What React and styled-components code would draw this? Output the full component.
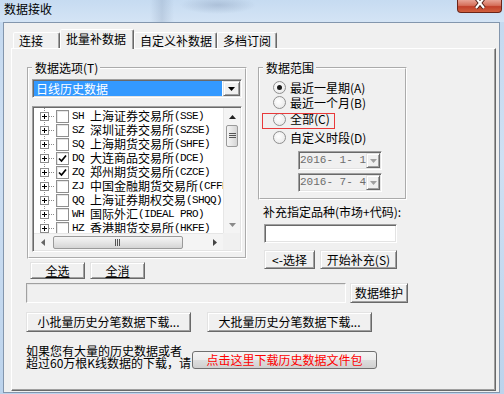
import React from 'react'
import styled, { createGlobalStyle, css } from 'styled-components'

const GlobalStyle = createGlobalStyle`
  html, body { margin: 0; padding: 0; }
  body {
    font-family: "Noto Sans CJK SC", "Noto Sans", sans-serif;
    font-size: 12px;
    color: #000;
  }
`

// classic 3D edges
const raised = css`
  border: 1px solid;
  border-color: #e3e3e3 #696969 #696969 #e3e3e3;
  box-shadow: inset 1px 1px #fff, inset -1px -1px #a0a0a0;
  background: #f0f0f0;
`
const sunken = css`
  border: 1px solid;
  border-color: #a0a0a0 #fff #fff #a0a0a0;
  box-shadow: inset 1px 1px #696969, inset -1px -1px #e3e3e3;
`

const markets = [
  { code: 'SH', name: '上海证券交易所', abbr: 'SSE' },
  { code: 'SZ', name: '深圳证券交易所', abbr: 'SZSE' },
  { code: 'SQ', name: '上海期货交易所', abbr: 'SHFE' },
  { code: 'DQ', name: '大连商品交易所', abbr: 'DCE', checked: true },
  { code: 'ZQ', name: '郑州期货交易所', abbr: 'CZCE', checked: true },
  { code: 'ZJ', name: '中国金融期货交易所', abbr: 'CFFEX' },
  { code: 'QQ', name: '上海证券期权交易', abbr: 'SHQQ' },
  { code: 'WH', name: '国际外汇', abbr: 'IDEAL PRO' },
  { code: 'HZ', name: '香港期货交易所', abbr: 'HKFE' },
  { code: 'HG', name: '香港联合交易所', abbr: 'HKEX' },
]

const ranges = [
  { label: '最近一星期(A)', h: 15, checked: true },
  { label: '最近一个月(B)', h: 15 },
  { label: '全部(C)', h: 18, marked: true },
  { label: '自定义时段(D)', h: 19 },
]

const Window = styled.div`
  width: 504px;
  height: 394px;
  overflow: hidden;
  display: flex;
  flex-direction: column;
  background: linear-gradient(180deg, #c3d8ef 0%, #cfe0f3 40%, #bcd3ec 100%);
`

const TitleBar = styled.div`
  height: 22px;
  flex: none;
  display: flex;
  justify-content: space-between;
  align-items: flex-start;
  background:
    radial-gradient(ellipse 38px 9px at 218px 5px, rgba(120, 140, 170, 0.35), transparent),
    linear-gradient(90deg, transparent 150px, rgba(110, 130, 160, 0.22) 162px, transparent 174px),
    linear-gradient(180deg, #c6dbf1, #d4e4f5);
`

const Title = styled.div`
  padding: 3px 0 0 4px;
  font-size: 12px;
  line-height: 12px;
  color: #000;
`

const CloseButton = styled.div`
  width: 45px;
  height: 13px;
  margin-right: 2px;
  box-sizing: border-box;
  border: 1px solid #6b2418;
  border-top: none;
  border-radius: 0 0 4px 4px;
  background: linear-gradient(180deg, #e8a395 0%, #d6705b 45%, #c2402a 55%, #d0603f 100%);
  display: flex;
  justify-content: center;
  align-items: flex-start;
`

const Client = styled.div`
  flex: 1;
  margin: 0 4px 1px 3px;
  border: 1px solid #8396ad;
  background: #f0f0f0;
  display: flex;
  flex-direction: column;
`

const TabRow = styled.div`
  height: 25px;
  margin-left: 9px;
  display: flex;
  align-items: flex-end;
`

const Tab = styled.div`
  box-sizing: border-box;
  width: ${p => p.$w}px;
  height: ${p => (p.$active ? 20 : 16)}px;
  margin-bottom: ${p => (p.$active ? -1 : 0)}px;
  position: relative;
  z-index: ${p => (p.$active ? 2 : 0)};
  padding-left: 5px;
  border: 1px solid;
  border-bottom: none;
  border-color: #fff #696969 transparent #fff;
  border-radius: 2px 2px 0 0;
  box-shadow: inset -1px 0 #a0a0a0;
  background: #f0f0f0;
  font-size: 12px;
  line-height: ${p => (p.$active ? 18 : 15)}px;
  white-space: nowrap;
`

const TabPanel = styled.div`
  box-sizing: border-box;
  width: 485px;
  height: 343px;
  margin-left: 7px;
  padding: 12px 0 0 14px;
  border: 1px solid;
  border-color: #fff #696969 #696969 #fff;
  box-shadow: inset -1px -1px #a0a0a0;
`

const TopSection = styled.div`
  display: flex;
  gap: 11px;
  align-items: flex-start;
`

const Column = styled.div`
  width: ${p => p.$w}px;
  display: flex;
  flex-direction: column;
`

const GroupBox = styled.fieldset`
  box-sizing: border-box;
  min-width: 0;
  width: ${p => p.$w}px;
  margin: 0 0 0 ${p => p.$ml || 0}px;
  padding: ${p => p.$pad};
  border: 2px groove #fff;
`

const Legend = styled.legend`
  padding: 0 2px 0 3px;
  font-size: 12px;
  line-height: 14px;
`

const Combo = styled.div`
  box-sizing: border-box;
  width: 210px;
  height: 19px;
  padding: 1px;
  ${sunken};
  background: #fff;
  display: flex;
`

const ComboValue = styled.div`
  flex: 1;
  margin-right: 1px;
  padding-left: 2px;
  background: #3399ff;
  color: #fff;
  font-size: 12px;
  line-height: 15px;
`

const DropButton = styled.div`
  box-sizing: border-box;
  width: ${p => p.$w}px;
  ${raised};
  display: flex;
  align-items: center;
  justify-content: center;
`

const ListBox = styled.div`
  box-sizing: border-box;
  width: 210px;
  height: 146px;
  margin-top: 8px;
  padding: 1px;
  ${sunken};
  background: #fff;
  display: grid;
  grid-template-columns: 1fr 17px;
  grid-template-rows: 1fr 17px;
`

const ListBody = styled.div`
  overflow: hidden;
  padding-top: 1px;
  background:
    repeating-linear-gradient(180deg, #8a8a8a 0 1px, transparent 1px 2px) 10px 0 / 1px 100% no-repeat,
    #fff;
`

const Row = styled.div`
  height: 14px;
  padding-left: 6px;
  display: flex;
  align-items: center;
  white-space: nowrap;
`

const Connector = styled.span`
  width: 6px;
  height: 1px;
  flex: none;
  background: repeating-linear-gradient(90deg, #8a8a8a 0 1px, transparent 1px 2px);
`

const CheckBox = styled.span`
  box-sizing: border-box;
  width: 13px;
  height: 13px;
  flex: none;
  margin: 0 3px 0 1px;
  border: 1px solid #8f8f8f;
  background: #fff;
  box-shadow: inset 1px 1px #e6e6e6;
  display: flex;
  align-items: center;
  justify-content: center;
`

const Code = styled.span`
  font-family: "Liberation Mono", monospace;
  font-size: 11px;
  letter-spacing: -0.6px;
  line-height: 14px;
  margin-right: 6px;
`

const Name = styled.span`
  font-size: 12px;
  line-height: 14px;
`

const VScroll = styled.div`
  display: flex;
  flex-direction: column;
  background: #f4f4f4;
  border-left: 1px solid #e6e6e6;
`

const HScroll = styled.div`
  display: flex;
  align-items: center;
  background: #f4f4f4;
  border-top: 1px solid #e6e6e6;
`

const ScrollCorner = styled.div`
  background: #f0f0f0;
`

const ArrowBox = styled.div`
  width: 17px;
  height: 17px;
  flex: none;
  display: flex;
  align-items: center;
  justify-content: center;
`

const VThumb = styled.div`
  height: 22px;
  margin: 0 2px;
  box-sizing: border-box;
  border: 1px solid #9a9a9a;
  border-radius: 2px;
  background: linear-gradient(90deg, #f5f5f5, #e6e6e6 50%, #d5d5d5);
  display: flex;
  align-items: center;
  justify-content: center;
`

const HThumb = styled.div`
  width: 130px;
  height: 13px;
  margin-left: 2px;
  box-sizing: border-box;
  border: 1px solid #9a9a9a;
  border-radius: 2px;
  background: linear-gradient(180deg, #f5f5f5, #e6e6e6 50%, #d5d5d5);
  display: flex;
  align-items: center;
  justify-content: center;
`

const Spacer = styled.div`
  flex: 1;
`

const ButtonRow = styled.div`
  display: flex;
  gap: ${p => p.$gap}px;
  margin: ${p => p.$m};
`

const Button = styled.button`
  box-sizing: border-box;
  width: ${p => p.$w}px;
  height: ${p => p.$h}px;
  padding: 0;
  ${raised};
  font-family: inherit;
  font-size: 12px;
  line-height: 12px;
  color: #000;
  text-decoration: ${p => (p.$u ? 'underline' : 'none')};
  white-space: nowrap;
`

const RadioList = styled.div`
  margin-left: 10px;
  display: flex;
  flex-direction: column;
`

const RadioRow = styled.div`
  position: relative;
  height: ${p => p.$h}px;
  display: flex;
  align-items: center;
`

const RadioDot = styled.span`
  box-sizing: border-box;
  width: 13px;
  height: 13px;
  flex: none;
  border-radius: 50%;
  border: 1px solid #8f8f8f;
  background: radial-gradient(circle at 40% 40%, #fff, #e4e4e4);
  display: flex;
  align-items: center;
  justify-content: center;
  &::after {
    content: '';
    width: 5px;
    height: 5px;
    border-radius: 50%;
    background: ${p => (p.$on ? '#1a1a1a' : 'transparent')};
  }
`

const RadioLabel = styled.span`
  margin-left: 4px;
  font-size: 12px;
  line-height: 14px;
`

const Annotation = styled.div`
  position: absolute;
  left: -11px;
  top: 3px;
  width: 73px;
  height: 16px;
  box-sizing: border-box;
  border: 1px solid #e8393a;
  pointer-events: none;
`

const DatePicker = styled.div`
  box-sizing: border-box;
  width: 84px;
  height: 19px;
  margin: ${p => p.$mt}px 0 0 35px;
  padding: 1px;
  ${sunken};
  background: #f0f0f0;
  display: flex;
`

const DateText = styled.div`
  flex: 1;
  color: #6d6d6d;
  font-family: "Liberation Mono", monospace;
  font-size: 11px;
  line-height: 15px;
  white-space: pre;
`

const SideLabel = styled.div`
  margin: 6px 0 0 5px;
  font-size: 12px;
  line-height: 12px;
  white-space: nowrap;
`

const TextInput = styled.div`
  box-sizing: border-box;
  width: 133px;
  height: 19px;
  margin: 6px 0 0 6px;
  ${sunken};
  background: #fff;
`

const ProgressRow = styled.div`
  display: flex;
  gap: 4px;
  margin-top: 4px;
`

const ProgressBox = styled.div`
  box-sizing: border-box;
  width: 320px;
  height: 20px;
  border: 1px solid;
  border-color: #a0a0a0 #fff #fff #a0a0a0;
  box-shadow: inset 1px 1px #e3e3e3;
  background: #f0f0f0;
`

const Footer = styled.div`
  display: flex;
  align-items: flex-end;
  margin-top: 13px;
`

const Notice = styled.div`
  font-size: 12px;
  line-height: 12px;
  white-space: nowrap;
`

const LinkButton = styled.button`
  box-sizing: border-box;
  width: 185px;
  height: 18px;
  margin-left: 1px;
  padding: 0;
  border: 1px solid #707070;
  border-radius: 3px;
  background: linear-gradient(180deg, #f4f4f4 0%, #ececec 50%, #dedede 51%, #d0d0d0 100%);
  color: #ff0000;
  font-family: inherit;
  font-size: 12px;
  line-height: 12px;
`

const Triangle = ({ dir = 'down', color = '#000' }) => {
  const d = {
    down: 'M0 0 L7 0 L3.5 4 Z',
    up: 'M0 4 L7 4 L3.5 0 Z',
    left: 'M4 0 L4 7 L0 3.5 Z',
    right: 'M0 0 L0 7 L4 3.5 Z',
  }[dir]
  const vert = dir === 'up' || dir === 'down'
  return (
    <svg width={vert ? 7 : 4} height={vert ? 4 : 7} viewBox={vert ? '0 0 7 4' : '0 0 4 7'}>
      <path d={d} fill={color} />
    </svg>
  )
}

const PlusBox = () => (
  <svg width="9" height="9" viewBox="0 0 9 9" style={{ flex: 'none' }}>
    <rect x="0.5" y="0.5" width="8" height="8" fill="#fff" stroke="#8c8c8c" />
    <path d="M2 4.5H7M4.5 2V7" stroke="#000" />
  </svg>
)

const Check = () => (
  <svg width="9" height="9" viewBox="0 0 9 9">
    <path d="M1 4.5 L3.5 7 L8 1.5" fill="none" stroke="#000" strokeWidth="1.7" />
  </svg>
)

const Grip = ({ vertical }) => (
  <svg width={vertical ? 7 : 6} height={vertical ? 6 : 7} viewBox={vertical ? '0 0 7 6' : '0 0 6 7'}>
    {vertical
      ? <path d="M0 0.5H7M0 2.5H7M0 4.5H7" stroke="#555" />
      : <path d="M0.5 0V7M2.5 0V7M4.5 0V7" stroke="#555" />}
  </svg>
)

const App = () => {
  return (
    <>
      <GlobalStyle />
      <Window>
        <TitleBar>
          <Title>数据接收</Title>
          <CloseButton>
            <svg width="14" height="10" viewBox="0 0 14 10">
              <path d="M3 -2 L11 8 M11 -2 L3 8" stroke="#4a1c14" strokeWidth="4" />
              <path d="M3 -2 L11 8 M11 -2 L3 8" stroke="#fff" strokeWidth="2.2" />
            </svg>
          </CloseButton>
        </TitleBar>

        <Client>
          <TabRow>
            <Tab $w={47}>连接</Tab>
            <Tab $w={74} $active>批量补数据</Tab>
            <Tab $w={83}>自定义补数据</Tab>
            <Tab $w={60}>多档订阅</Tab>
          </TabRow>

          <TabPanel>
            <TopSection>
              <Column $w={221}>
                <GroupBox $w={220} $ml={1} $pad="4px 3px 5px 3px">
                  <Legend>数据选项(T)</Legend>
                  <Combo>
                    <ComboValue>日线历史数据</ComboValue>
                    <DropButton $w={17}><Triangle /></DropButton>
                  </Combo>
                  <ListBox>
                    <ListBody>
                      {markets.map(m => (
                        <Row key={m.code}>
                          <PlusBox />
                          <Connector />
                          <CheckBox>{m.checked && <Check />}</CheckBox>
                          <Code>{m.code}</Code>
                          <Name>{m.name}</Name>
                          <Code>({m.abbr})</Code>
                        </Row>
                      ))}
                    </ListBody>
                    <VScroll>
                      <ArrowBox><Triangle dir="up" color="#222" /></ArrowBox>
                      <VThumb><Grip vertical /></VThumb>
                      <Spacer />
                      <ArrowBox><Triangle dir="down" color="#8a8a8a" /></ArrowBox>
                    </VScroll>
                    <HScroll>
                      <ArrowBox><Triangle dir="left" color="#666" /></ArrowBox>
                      <HThumb><Grip /></HThumb>
                      <Spacer />
                      <ArrowBox><Triangle dir="right" color="#444" /></ArrowBox>
                    </HScroll>
                    <ScrollCorner />
                  </ListBox>
                </GroupBox>
                <ButtonRow $gap={5} $m="3px 0 0 4px">
                  <Button $w={55} $h={17} $u>全选</Button>
                  <Button $w={55} $h={17} $u>全消</Button>
                </ButtonRow>
              </Column>

              <Column $w={149}>
                <GroupBox $w={149} $pad="5px 4px 6px 3px">
                  <Legend>数据范围</Legend>
                  <RadioList>
                    {ranges.map(r => (
                      <RadioRow key={r.label} $h={r.h}>
                        <RadioDot $on={r.checked} />
                        <RadioLabel>{r.label}</RadioLabel>
                        {r.marked && <Annotation />}
                      </RadioRow>
                    ))}
                  </RadioList>
                  <DatePicker $mt={4}>
                    <DateText>2016- 1- 1</DateText>
                    <DropButton $w={16}><Triangle color="#a0a0a0" /></DropButton>
                  </DatePicker>
                  <DatePicker $mt={3}>
                    <DateText>2016- 7- 4</DateText>
                    <DropButton $w={16}><Triangle color="#a0a0a0" /></DropButton>
                  </DatePicker>
                </GroupBox>
                <SideLabel>补充指定品种(市场+代码):</SideLabel>
                <TextInput />
                <ButtonRow $gap={5} $m="7px 0 0 6px">
                  <Button $w={51} $h={19}>&lt;-选择</Button>
                  <Button $w={77} $h={19}>开始补充(S)</Button>
                </ButtonRow>
              </Column>
            </TopSection>

            <ProgressRow>
              <ProgressBox />
              <Button $w={58} $h={20}>数据维护</Button>
            </ProgressRow>

            <ButtonRow $gap={16} $m="9px 0 0 0">
              <Button $w={165} $h={20}>小批量历史分笔数据下载...</Button>
              <Button $w={165} $h={20}>大批量历史分笔数据下载...</Button>
            </ButtonRow>

            <Footer>
              <Notice>
                如果您有大量的历史数据或者<br />
                超过60万根K线数据的下载，请
              </Notice>
              <LinkButton>点击这里下载历史数据文件包</LinkButton>
            </Footer>
          </TabPanel>
        </Client>
      </Window>
    </>
  )
}

export default App
